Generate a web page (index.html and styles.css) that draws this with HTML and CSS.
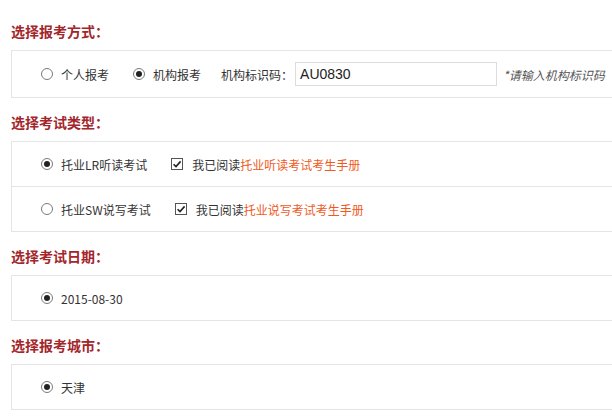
FILE: index.html
```html
<!DOCTYPE html>
<html lang="zh-CN">
<head>
<meta charset="utf-8">
<title>报名</title>
<link rel="stylesheet" href="styles.css">
</head>
<body>
<div class="page">
  <h2 class="title">选择报考方式：</h2>
  <div class="box">
    <div class="row row-tall">
      <label class="opt"><span class="radio"></span>个人报考</label>
      <label class="opt"><span class="radio on"></span>机构报考</label>
      <span class="lbl">机构标识码：</span>
      <span class="input">AU0830</span>
      <span class="hint">*请输入机构标识码</span>
    </div>
  </div>

  <h2 class="title">选择考试类型：</h2>
  <div class="box">
    <div class="row">
      <label class="opt"><span class="radio on"></span>托业LR听读考试</label>
      <label class="chk"><span class="check"><svg viewBox="0 0 12 12" width="12" height="12"><path d="M2.6 6.2 L5 8.6 L9.6 3.4" fill="none" stroke="#222" stroke-width="1.6"/></svg></span>我已阅读<a class="link">托业听读考试考生手册</a></label>
    </div>
    <div class="row sep">
      <label class="opt"><span class="radio"></span>托业SW说写考试</label>
      <label class="chk"><span class="check"><svg viewBox="0 0 12 12" width="12" height="12"><path d="M2.6 6.2 L5 8.6 L9.6 3.4" fill="none" stroke="#222" stroke-width="1.6"/></svg></span>我已阅读<a class="link">托业说写考试考生手册</a></label>
    </div>
  </div>

  <h2 class="title">选择考试日期：</h2>
  <div class="box">
    <div class="row">
      <label class="opt"><span class="radio on"></span>2015-08-30</label>
    </div>
  </div>

  <h2 class="title">选择报考城市：</h2>
  <div class="box">
    <div class="row">
      <label class="opt"><span class="radio on"></span>天津</label>
    </div>
  </div>
</div>
</body>
</html>
```

FILE: styles.css
```css
html, body {
  margin: 0;
  padding: 0;
  background: #fff;
  overflow: hidden;
}
body {
  font-family: "Microsoft YaHei", "Noto Sans CJK SC", sans-serif;
  font-size: 12px;
  color: #333;
}
.page {
  padding: 7px 0 0 11px;
  width: 601px;
}
.title {
  margin: 0;
  padding: 16px 0 11px;
  font-size: 14px;
  line-height: 16px;
  font-weight: bold;
  color: #a3262b;
}
.box {
  border: 1px solid #e5e5e5;
  border-right: none;
}
.row {
  display: flex;
  align-items: center;
  height: 44px;
  padding-left: 29px;
  white-space: nowrap;
}
.row-tall {
  height: 46px;
}
.sep {
  border-top: 1px solid #e5e5e5;
}
.opt {
  display: inline-flex;
  align-items: center;
  margin-right: 24px;
}
.radio {
  box-sizing: border-box;
  width: 12px;
  height: 12px;
  border: 1px solid #7a7a7a;
  border-radius: 50%;
  margin-right: 8px;
  display: inline-flex;
  align-items: center;
  justify-content: center;
}
.radio.on::after {
  content: "";
  width: 6px;
  height: 6px;
  border-radius: 50%;
  background: #222;
}
.lbl {
  margin-left: -4px;
  margin-right: 2px;
}
.input {
  box-sizing: border-box;
  width: 202px;
  height: 24px;
  border: 1px solid #dcdcdc;
  padding-left: 4px;
  font-family: "Liberation Sans", Arial, sans-serif;
  font-size: 14px;
  line-height: 22px;
  color: #222;
}
.hint {
  margin-left: 6px;
  font-style: italic;
  color: #555;
}
.chk {
  display: inline-flex;
  align-items: center;
}
.check {
  box-sizing: border-box;
  width: 12px;
  height: 12px;
  border: 1px solid #555;
  margin-right: 9px;
  display: inline-flex;
}
.check svg {
  margin: -1px;
}
.link {
  color: #f05a1e;
  text-decoration: none;
}
```
